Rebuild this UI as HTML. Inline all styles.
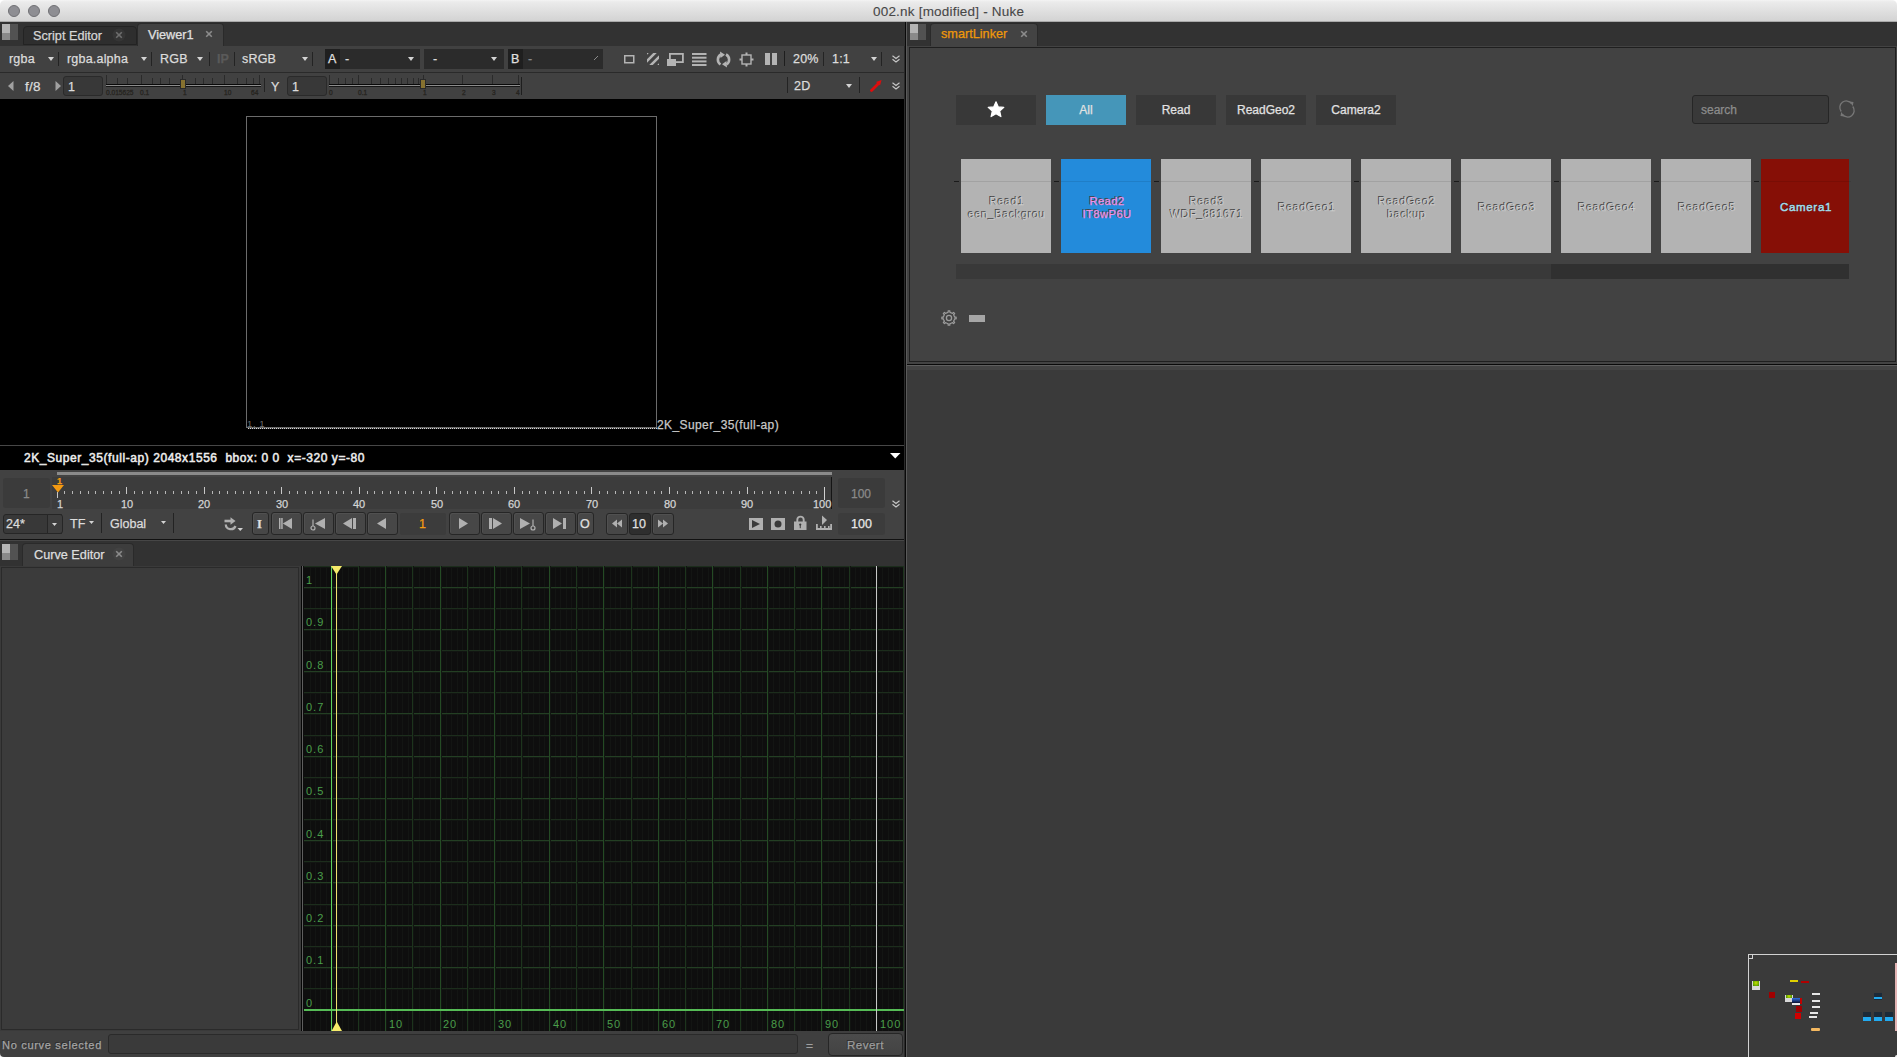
<!DOCTYPE html>
<html><head><meta charset="utf-8">
<style>
*{box-sizing:border-box;margin:0;padding:0}
html,body{width:1897px;height:1057px;overflow:hidden;background:#3a3a3a;font-family:"Liberation Sans",sans-serif;font-size:13px;color:#d0d0d0}
.a{position:absolute}
.t{position:absolute;white-space:pre;line-height:1;-webkit-text-stroke:0.25px currentColor}
svg{position:absolute;overflow:visible}
.tab{position:absolute;border-radius:4px 4px 0 0}
.ico{position:absolute;left:2px;width:16px;height:16px;background:linear-gradient(90deg,#b8b8b8 0,#b8b8b8 8px,#5a5a5a 8px)}
</style></head><body>

<div class="a" style="left:0px;top:0px;width:1897px;height:12px;background:#ffffff"></div>
<div class="a" style="left:0px;top:0px;width:1897px;height:22px;background:linear-gradient(#f4f4f4 0,#ebebeb 2px,#d3d3d3);border-bottom:1px solid #a9a9a9;border-radius:5px 5px 0 0"></div>
<div class="a" style="left:8px;top:5px;width:12px;height:12px;border-radius:50%;background:#8e8e93;border:1px solid #707074"></div>
<div class="a" style="left:28px;top:5px;width:12px;height:12px;border-radius:50%;background:#8e8e93;border:1px solid #707074"></div>
<div class="a" style="left:48px;top:5px;width:12px;height:12px;border-radius:50%;background:#8e8e93;border:1px solid #707074"></div>
<div class="t" style="left:873px;top:5px;font-size:13.5px;letter-spacing:0.2px;color:#474747;-webkit-text-stroke:0.1px #474747">002.nk [modified] - Nuke</div>
<div class="a" style="left:0px;top:22px;width:905px;height:24px;background:#323232"></div>
<div class="a" style="left:2px;top:24px;width:16px;height:16px;background:linear-gradient(90deg,#b5b5b5 0 8px,#525252 8px);"></div>
<div class="a" style="left:2px;top:33px;width:8px;height:7px;background:#8a8a8a"></div>
<div class="a" style="left:23px;top:26px;width:114px;height:19px;background:#2e2e2e;border-radius:4px 4px 0 0;border:1px solid #232323"></div>
<div class="t" style="left:33px;top:30px;font-size:12.7px;color:#d6d6d6">Script Editor</div>
<div class="a" style="left:137px;top:23px;width:87px;height:24px;background:#414141;border-radius:4px 4px 0 0;border:1px solid #2a2a2a;border-bottom:none"></div>
<div class="t" style="left:148px;top:29px;font-size:12.7px;color:#e0e0e0">Viewer1</div>
<div class="a" style="left:0px;top:46px;width:905px;height:26px;background:#414141"></div>
<div class="a" style="left:0px;top:72px;width:905px;height:1px;background:#2a2a2a"></div>
<div class="a" style="left:0px;top:73px;width:905px;height:26px;background:#414141"></div>
<div class="t" style="left:9px;top:53px;font-size:12.5px;letter-spacing:0.2px;color:#dcdcdc">rgba</div>
<svg style="left:48px;top:57px" width="6" height="4"><path d="M0 0H6L3.0 4Z" fill="#d4d4d4"/></svg>
<div class="a" style="left:58px;top:52px;width:1px;height:14px;background:#232323"></div>
<div class="t" style="left:67px;top:53px;font-size:12.5px;letter-spacing:0.2px;color:#dcdcdc">rgba.alpha</div>
<svg style="left:141px;top:57px" width="6" height="4"><path d="M0 0H6L3.0 4Z" fill="#d4d4d4"/></svg>
<div class="a" style="left:151px;top:52px;width:1px;height:14px;background:#232323"></div>
<div class="t" style="left:160px;top:53px;font-size:12.5px;letter-spacing:0.2px;color:#dcdcdc">RGB</div>
<svg style="left:197px;top:57px" width="6" height="4"><path d="M0 0H6L3.0 4Z" fill="#d4d4d4"/></svg>
<div class="a" style="left:209px;top:52px;width:1px;height:14px;background:#232323"></div>
<div class="t" style="left:217px;top:53px;font-size:12.5px;color:#5a5a5a;font-weight:bold">IP</div>
<div class="a" style="left:234px;top:52px;width:1px;height:14px;background:#232323"></div>
<div class="t" style="left:242px;top:53px;font-size:12.5px;letter-spacing:0.2px;color:#dcdcdc">sRGB</div>
<svg style="left:302px;top:57px" width="6" height="4"><path d="M0 0H6L3.0 4Z" fill="#d4d4d4"/></svg>
<div class="a" style="left:312px;top:52px;width:1px;height:14px;background:#232323"></div>
<div class="a" style="left:325px;top:49px;width:95px;height:20px;background:#2b2b2b"></div>
<div class="a" style="left:325px;top:49px;width:15px;height:20px;background:#1f1f1f"></div>
<div class="t" style="left:328px;top:53px;font-size:12.5px;color:#e0e0e0">A</div>
<div class="t" style="left:345px;top:53px;font-size:12.5px;letter-spacing:0.2px;color:#dcdcdc">-</div>
<svg style="left:408px;top:57px" width="6" height="4"><path d="M0 0H6L3.0 4Z" fill="#d4d4d4"/></svg>
<div class="a" style="left:424px;top:49px;width:80px;height:20px;background:#2b2b2b"></div>
<div class="t" style="left:433px;top:53px;font-size:12.5px;letter-spacing:0.2px;color:#dcdcdc">-</div>
<svg style="left:491px;top:57px" width="6" height="4"><path d="M0 0H6L3.0 4Z" fill="#d4d4d4"/></svg>
<div class="a" style="left:508px;top:49px;width:95px;height:20px;background:#2b2b2b"></div>
<div class="a" style="left:508px;top:49px;width:15px;height:20px;background:#1f1f1f"></div>
<div class="t" style="left:511px;top:53px;font-size:12.5px;color:#e0e0e0">B</div>
<div class="t" style="left:528px;top:53px;font-size:12.5px;color:#8a8a8a">-</div>
<svg style="left:594px;top:56px" width="4" height="4"><path d="M0 4L4 0" stroke="#8a8a8a" stroke-width="1"/></svg>
<svg style="left:624px;top:55px" width="11" height="9"><rect x="0.75" y="0.75" width="9" height="7" fill="none" stroke="#b4b4b4" stroke-width="1.5"/></svg>
<svg style="left:647px;top:53px" width="12" height="12"><defs><clipPath id="hc"><rect width="12" height="12"/></clipPath></defs><g clip-path="url(#hc)" stroke="#b4b4b4" stroke-width="2.5"><path d="M-3 3L3 -3M-3 11L11 -3M1 15L15 1M9 15L15 9"/></g></svg>
<svg style="left:667px;top:53px" width="17" height="14"><rect x="2.9" y="0.9" width="13" height="8.2" fill="none" stroke="#b4b4b4" stroke-width="1.8"/><rect x="0" y="6" width="9" height="7" fill="#b4b4b4"/></svg>
<svg style="left:692px;top:53px" width="15" height="13"><g fill="#b4b4b4"><rect y="0" width="14.5" height="2"/><rect y="3.7" width="14.5" height="2"/><rect y="7.4" width="14.5" height="2"/><rect y="11" width="14.5" height="2"/></g></svg>
<svg style="left:715px;top:51px" width="17" height="17"><g fill="none" stroke="#b4b4b4" stroke-width="2.6"><path d="M6 3.5A5.8 5.8 0 0 0 5.5 13.5"/><path d="M11 3.5A5.8 5.8 0 0 1 11.5 13.5"/></g><path d="M5 0.5L10 3.8 5.5 7Z" fill="#b4b4b4"/><path d="M12 16.5L7 13.2 11.5 10Z" fill="#b4b4b4"/></svg>
<svg style="left:739px;top:52px" width="15" height="15"><rect x="3" y="3" width="9" height="9" fill="none" stroke="#b4b4b4" stroke-width="1.4"/><g fill="#b4b4b4"><rect x="6.5" y="0.5" width="2" height="2.5"/><rect x="6.5" y="12" width="2" height="2.5"/><rect x="0.5" y="6.5" width="2.5" height="2"/><rect x="12" y="6.5" width="2.5" height="2"/></g></svg>
<div class="a" style="left:765px;top:53px;width:5px;height:12px;background:#b4b4b4"></div>
<div class="a" style="left:772px;top:53px;width:5px;height:12px;background:#b4b4b4"></div>
<div class="a" style="left:784px;top:51px;width:1px;height:15px;background:#1e1e1e"></div>
<div class="t" style="left:793px;top:53px;font-size:12.5px;letter-spacing:0.2px;color:#dcdcdc">20%</div>
<div class="a" style="left:823px;top:52px;width:1px;height:14px;background:#232323"></div>
<div class="t" style="left:832px;top:53px;font-size:12.5px;letter-spacing:0.2px;color:#dcdcdc">1:1</div>
<svg style="left:871px;top:57px" width="6" height="4"><path d="M0 0H6L3.0 4Z" fill="#d4d4d4"/></svg>
<div class="a" style="left:881px;top:52px;width:1px;height:14px;background:#232323"></div>
<svg style="left:892px;top:55px" width="8" height="8"><path d="M0.5 0.8L4 3.5 7.5 0.8M0.5 4.3L4 7 7.5 4.3" fill="none" stroke="#c8c8c8" stroke-width="1.1"/></svg>
<svg style="left:8px;top:81px" width="6" height="10"><path d="M5.5 0V10L0 5Z" fill="#a0a0a0"/></svg>
<div class="t" style="left:25px;top:80px;font-size:13.5px;letter-spacing:0.3px;color:#dcdcdc">f/8</div>
<svg style="left:55px;top:81px" width="6" height="10"><path d="M0.5 0V10L6 5Z" fill="#a0a0a0"/></svg>
<div class="a" style="left:63px;top:76px;width:40px;height:20px;background:#383838;border:1px solid #2a2a2a;border-radius:3px"></div>
<div class="t" style="left:68px;top:81px;font-size:12.5px;letter-spacing:0.2px;color:#dcdcdc">1</div>
<div class="a" style="left:106px;top:84px;width:155px;height:1px;background:#0a0a0a"></div>
<div class="a" style="left:106px;top:85px;width:155px;height:1px;background:#8c8c8c"></div>
<div class="a" style="left:106px;top:86px;width:155px;height:1px;background:#161616"></div>
<div class="a" style="left:106px;top:75px;width:1px;height:9px;background:#2a2a2a"></div>
<div class="a" style="left:117px;top:78px;width:1px;height:6px;background:#2a2a2a"></div>
<div class="a" style="left:127px;top:78px;width:1px;height:6px;background:#2a2a2a"></div>
<div class="a" style="left:141px;top:75px;width:1px;height:9px;background:#2a2a2a"></div>
<div class="a" style="left:152px;top:78px;width:1px;height:6px;background:#2a2a2a"></div>
<div class="a" style="left:160px;top:78px;width:1px;height:6px;background:#2a2a2a"></div>
<div class="a" style="left:169px;top:78px;width:1px;height:6px;background:#2a2a2a"></div>
<div class="a" style="left:182px;top:75px;width:1px;height:9px;background:#2a2a2a"></div>
<div class="a" style="left:195px;top:78px;width:1px;height:6px;background:#2a2a2a"></div>
<div class="a" style="left:203px;top:78px;width:1px;height:6px;background:#2a2a2a"></div>
<div class="a" style="left:212px;top:78px;width:1px;height:6px;background:#2a2a2a"></div>
<div class="a" style="left:224px;top:75px;width:1px;height:9px;background:#2a2a2a"></div>
<div class="a" style="left:237px;top:78px;width:1px;height:6px;background:#2a2a2a"></div>
<div class="a" style="left:246px;top:78px;width:1px;height:6px;background:#2a2a2a"></div>
<div class="a" style="left:253px;top:78px;width:1px;height:6px;background:#2a2a2a"></div>
<div class="a" style="left:259px;top:75px;width:1px;height:9px;background:#2a2a2a"></div>
<div class="t" style="left:106px;top:90px;font-size:6.6px;color:#26241f;-webkit-text-stroke:0.3px #26241f">0.015625</div>
<div class="t" style="left:140px;top:90px;font-size:6.6px;color:#26241f;-webkit-text-stroke:0.3px #26241f">0.1</div>
<div class="t" style="left:183px;top:90px;font-size:6.6px;color:#26241f;-webkit-text-stroke:0.3px #26241f">1</div>
<div class="t" style="left:224px;top:90px;font-size:6.6px;color:#26241f;-webkit-text-stroke:0.3px #26241f">10</div>
<div class="t" style="left:251px;top:90px;font-size:6.6px;color:#26241f;-webkit-text-stroke:0.3px #26241f">64</div>
<div class="a" style="left:180px;top:79px;width:6px;height:10px;background:#86712f;border:1px solid #2a2a2a"></div>
<div class="a" style="left:264px;top:78px;width:1px;height:14px;background:#232323"></div>
<div class="t" style="left:271px;top:81px;font-size:12.5px;letter-spacing:0.2px;color:#dcdcdc">Y</div>
<div class="a" style="left:287px;top:76px;width:40px;height:20px;background:#383838;border:1px solid #2a2a2a;border-radius:3px"></div>
<div class="t" style="left:292px;top:81px;font-size:12.5px;letter-spacing:0.2px;color:#dcdcdc">1</div>
<div class="a" style="left:329px;top:84px;width:191px;height:1px;background:#0a0a0a"></div>
<div class="a" style="left:329px;top:85px;width:191px;height:1px;background:#8c8c8c"></div>
<div class="a" style="left:329px;top:86px;width:191px;height:1px;background:#161616"></div>
<div class="a" style="left:329px;top:75px;width:1px;height:9px;background:#2a2a2a"></div>
<div class="a" style="left:338px;top:78px;width:1px;height:6px;background:#2a2a2a"></div>
<div class="a" style="left:345px;top:78px;width:1px;height:6px;background:#2a2a2a"></div>
<div class="a" style="left:352px;top:78px;width:1px;height:6px;background:#2a2a2a"></div>
<div class="a" style="left:358px;top:75px;width:1px;height:9px;background:#2a2a2a"></div>
<div class="a" style="left:371px;top:78px;width:1px;height:6px;background:#2a2a2a"></div>
<div class="a" style="left:380px;top:78px;width:1px;height:6px;background:#2a2a2a"></div>
<div class="a" style="left:388px;top:78px;width:1px;height:6px;background:#2a2a2a"></div>
<div class="a" style="left:395px;top:78px;width:1px;height:6px;background:#2a2a2a"></div>
<div class="a" style="left:401px;top:78px;width:1px;height:6px;background:#2a2a2a"></div>
<div class="a" style="left:407px;top:78px;width:1px;height:6px;background:#2a2a2a"></div>
<div class="a" style="left:413px;top:78px;width:1px;height:6px;background:#2a2a2a"></div>
<div class="a" style="left:418px;top:78px;width:1px;height:6px;background:#2a2a2a"></div>
<div class="a" style="left:423px;top:75px;width:1px;height:9px;background:#2a2a2a"></div>
<div class="a" style="left:462px;top:75px;width:1px;height:9px;background:#2a2a2a"></div>
<div class="a" style="left:492px;top:75px;width:1px;height:9px;background:#2a2a2a"></div>
<div class="a" style="left:518px;top:75px;width:1px;height:9px;background:#2a2a2a"></div>
<div class="t" style="left:329px;top:90px;font-size:6.6px;color:#26241f;-webkit-text-stroke:0.3px #26241f">0</div>
<div class="t" style="left:358px;top:90px;font-size:6.6px;color:#26241f;-webkit-text-stroke:0.3px #26241f">0.1</div>
<div class="t" style="left:423px;top:90px;font-size:6.6px;color:#26241f;-webkit-text-stroke:0.3px #26241f">1</div>
<div class="t" style="left:462px;top:90px;font-size:6.6px;color:#26241f;-webkit-text-stroke:0.3px #26241f">2</div>
<div class="t" style="left:492px;top:90px;font-size:6.6px;color:#26241f;-webkit-text-stroke:0.3px #26241f">3</div>
<div class="t" style="left:516px;top:90px;font-size:6.6px;color:#26241f;-webkit-text-stroke:0.3px #26241f">4</div>
<div class="a" style="left:420px;top:79px;width:6px;height:10px;background:#86712f;border:1px solid #2a2a2a"></div>
<div class="a" style="left:521px;top:77px;width:1px;height:18px;background:#1e1e1e"></div>
<div class="a" style="left:787px;top:77px;width:1px;height:16px;background:#232323"></div>
<div class="t" style="left:794px;top:80px;font-size:12.5px;letter-spacing:0.2px;color:#dcdcdc">2D</div>
<svg style="left:846px;top:84px" width="6" height="4"><path d="M0 0H6L3.0 4Z" fill="#d4d4d4"/></svg>
<div class="a" style="left:859px;top:77px;width:1px;height:16px;background:#232323"></div>
<svg style="left:870px;top:79px" width="13" height="13"><path d="M1.5 11.5L8 5" stroke="#e00c0c" stroke-width="2.8" stroke-linecap="round"/><path d="M6 3L11.5 1 10 6.5Z" fill="#e00c0c"/></svg>
<svg style="left:892px;top:82px" width="8" height="8"><path d="M0.5 0.8L4 3.5 7.5 0.8M0.5 4.3L4 7 7.5 4.3" fill="none" stroke="#c8c8c8" stroke-width="1.1"/></svg>
<div class="a" style="left:0px;top:99px;width:905px;height:346px;background:#000"></div>
<div class="a" style="left:246px;top:116px;width:411px;height:312px;border:1px solid #6b6b6b"></div>
<div class="a" style="left:248px;top:428px;width:409px;height:1px;background:repeating-linear-gradient(90deg,#d8d8d8 0 1px,#3a3a3a 1px 2px)"></div>
<div class="t" style="left:657px;top:419px;font-size:12px;letter-spacing:0.4px;color:#c8c8c8">2K_Super_35(full-ap)</div>
<div class="t" style="left:247px;top:419px;font-size:9.5px;letter-spacing:0.6px;color:#6e6e6e;-webkit-text-stroke:0">1, 1</div>
<div class="a" style="left:0px;top:445px;width:905px;height:1px;background:#474747"></div>
<div class="a" style="left:0px;top:446px;width:905px;height:24px;background:#000"></div>
<div class="t" style="left:24px;top:452px;font-size:12px;letter-spacing:0.56px;color:#ededed;-webkit-text-stroke:0.5px #ededed">2K_Super_35(full-ap) 2048x1556  bbox: 0 0  x=-320 y=-80</div>
<svg style="left:890px;top:453px" width="11" height="6"><path d="M0 0H10.5L5.25 5.5Z" fill="#fff"/></svg>
<div class="a" style="left:904px;top:99px;width:1px;height:371px;background:#4a4a4a"></div>
<div class="a" style="left:0px;top:470px;width:904px;height:39px;background:#424242"></div>
<div class="a" style="left:57px;top:472px;width:775px;height:3px;background:#8a8a8a"></div>
<div class="a" style="left:3px;top:478px;width:47px;height:30px;background:#3b3b3b;border-radius:3px"></div>
<div class="t" style="left:23px;top:488px;font-size:12px;color:#8a8a8a">1</div>
<div class="a" style="left:52px;top:477px;width:780px;height:32px;background:#3c3c3c"></div>
<div class="a" style="left:831px;top:477px;width:1px;height:32px;background:#151515"></div>
<div class="a" style="left:838px;top:478px;width:47px;height:30px;background:#3b3b3b;border-radius:3px"></div>
<div class="t" style="left:851px;top:488px;font-size:12px;color:#8a8a8a">100</div>
<div class="a" style="left:0px;top:509px;width:904px;height:30px;background:#424242"></div>
<div class="a" style="left:0px;top:539px;width:905px;height:1px;background:#111"></div>
<div class="a" style="left:0px;top:540px;width:905px;height:1px;background:#464646"></div>
<div class="a" style="left:57px;top:492px;width:1px;height:6px;background:#c8c8c8"></div>
<div class="a" style="left:64px;top:491px;width:1px;height:3px;background:#b8b8b8"></div>
<div class="a" style="left:72px;top:491px;width:1px;height:3px;background:#b8b8b8"></div>
<div class="a" style="left:80px;top:491px;width:1px;height:3px;background:#b8b8b8"></div>
<div class="a" style="left:88px;top:491px;width:1px;height:3px;background:#b8b8b8"></div>
<div class="a" style="left:95px;top:491px;width:1px;height:3px;background:#b8b8b8"></div>
<div class="a" style="left:103px;top:491px;width:1px;height:3px;background:#b8b8b8"></div>
<div class="a" style="left:111px;top:491px;width:1px;height:3px;background:#b8b8b8"></div>
<div class="a" style="left:119px;top:491px;width:1px;height:3px;background:#b8b8b8"></div>
<div class="a" style="left:126px;top:487px;width:1px;height:7px;background:#c8c8c8"></div>
<div class="a" style="left:134px;top:491px;width:1px;height:3px;background:#b8b8b8"></div>
<div class="a" style="left:142px;top:491px;width:1px;height:3px;background:#b8b8b8"></div>
<div class="a" style="left:150px;top:491px;width:1px;height:3px;background:#b8b8b8"></div>
<div class="a" style="left:157px;top:491px;width:1px;height:3px;background:#b8b8b8"></div>
<div class="a" style="left:165px;top:491px;width:1px;height:3px;background:#b8b8b8"></div>
<div class="a" style="left:173px;top:491px;width:1px;height:3px;background:#b8b8b8"></div>
<div class="a" style="left:181px;top:491px;width:1px;height:3px;background:#b8b8b8"></div>
<div class="a" style="left:188px;top:491px;width:1px;height:3px;background:#b8b8b8"></div>
<div class="a" style="left:196px;top:491px;width:1px;height:3px;background:#b8b8b8"></div>
<div class="a" style="left:204px;top:487px;width:1px;height:7px;background:#c8c8c8"></div>
<div class="a" style="left:212px;top:491px;width:1px;height:3px;background:#b8b8b8"></div>
<div class="a" style="left:219px;top:491px;width:1px;height:3px;background:#b8b8b8"></div>
<div class="a" style="left:227px;top:491px;width:1px;height:3px;background:#b8b8b8"></div>
<div class="a" style="left:235px;top:491px;width:1px;height:3px;background:#b8b8b8"></div>
<div class="a" style="left:243px;top:491px;width:1px;height:3px;background:#b8b8b8"></div>
<div class="a" style="left:250px;top:491px;width:1px;height:3px;background:#b8b8b8"></div>
<div class="a" style="left:258px;top:491px;width:1px;height:3px;background:#b8b8b8"></div>
<div class="a" style="left:266px;top:491px;width:1px;height:3px;background:#b8b8b8"></div>
<div class="a" style="left:274px;top:491px;width:1px;height:3px;background:#b8b8b8"></div>
<div class="a" style="left:281px;top:487px;width:1px;height:7px;background:#c8c8c8"></div>
<div class="a" style="left:289px;top:491px;width:1px;height:3px;background:#b8b8b8"></div>
<div class="a" style="left:297px;top:491px;width:1px;height:3px;background:#b8b8b8"></div>
<div class="a" style="left:305px;top:491px;width:1px;height:3px;background:#b8b8b8"></div>
<div class="a" style="left:312px;top:491px;width:1px;height:3px;background:#b8b8b8"></div>
<div class="a" style="left:320px;top:491px;width:1px;height:3px;background:#b8b8b8"></div>
<div class="a" style="left:328px;top:491px;width:1px;height:3px;background:#b8b8b8"></div>
<div class="a" style="left:336px;top:491px;width:1px;height:3px;background:#b8b8b8"></div>
<div class="a" style="left:343px;top:491px;width:1px;height:3px;background:#b8b8b8"></div>
<div class="a" style="left:351px;top:491px;width:1px;height:3px;background:#b8b8b8"></div>
<div class="a" style="left:359px;top:487px;width:1px;height:7px;background:#c8c8c8"></div>
<div class="a" style="left:367px;top:491px;width:1px;height:3px;background:#b8b8b8"></div>
<div class="a" style="left:374px;top:491px;width:1px;height:3px;background:#b8b8b8"></div>
<div class="a" style="left:382px;top:491px;width:1px;height:3px;background:#b8b8b8"></div>
<div class="a" style="left:390px;top:491px;width:1px;height:3px;background:#b8b8b8"></div>
<div class="a" style="left:398px;top:491px;width:1px;height:3px;background:#b8b8b8"></div>
<div class="a" style="left:405px;top:491px;width:1px;height:3px;background:#b8b8b8"></div>
<div class="a" style="left:413px;top:491px;width:1px;height:3px;background:#b8b8b8"></div>
<div class="a" style="left:421px;top:491px;width:1px;height:3px;background:#b8b8b8"></div>
<div class="a" style="left:429px;top:491px;width:1px;height:3px;background:#b8b8b8"></div>
<div class="a" style="left:436px;top:487px;width:1px;height:7px;background:#c8c8c8"></div>
<div class="a" style="left:444px;top:491px;width:1px;height:3px;background:#b8b8b8"></div>
<div class="a" style="left:452px;top:491px;width:1px;height:3px;background:#b8b8b8"></div>
<div class="a" style="left:460px;top:491px;width:1px;height:3px;background:#b8b8b8"></div>
<div class="a" style="left:467px;top:491px;width:1px;height:3px;background:#b8b8b8"></div>
<div class="a" style="left:475px;top:491px;width:1px;height:3px;background:#b8b8b8"></div>
<div class="a" style="left:483px;top:491px;width:1px;height:3px;background:#b8b8b8"></div>
<div class="a" style="left:491px;top:491px;width:1px;height:3px;background:#b8b8b8"></div>
<div class="a" style="left:498px;top:491px;width:1px;height:3px;background:#b8b8b8"></div>
<div class="a" style="left:506px;top:491px;width:1px;height:3px;background:#b8b8b8"></div>
<div class="a" style="left:514px;top:487px;width:1px;height:7px;background:#c8c8c8"></div>
<div class="a" style="left:522px;top:491px;width:1px;height:3px;background:#b8b8b8"></div>
<div class="a" style="left:529px;top:491px;width:1px;height:3px;background:#b8b8b8"></div>
<div class="a" style="left:537px;top:491px;width:1px;height:3px;background:#b8b8b8"></div>
<div class="a" style="left:545px;top:491px;width:1px;height:3px;background:#b8b8b8"></div>
<div class="a" style="left:553px;top:491px;width:1px;height:3px;background:#b8b8b8"></div>
<div class="a" style="left:560px;top:491px;width:1px;height:3px;background:#b8b8b8"></div>
<div class="a" style="left:568px;top:491px;width:1px;height:3px;background:#b8b8b8"></div>
<div class="a" style="left:576px;top:491px;width:1px;height:3px;background:#b8b8b8"></div>
<div class="a" style="left:584px;top:491px;width:1px;height:3px;background:#b8b8b8"></div>
<div class="a" style="left:591px;top:487px;width:1px;height:7px;background:#c8c8c8"></div>
<div class="a" style="left:599px;top:491px;width:1px;height:3px;background:#b8b8b8"></div>
<div class="a" style="left:607px;top:491px;width:1px;height:3px;background:#b8b8b8"></div>
<div class="a" style="left:615px;top:491px;width:1px;height:3px;background:#b8b8b8"></div>
<div class="a" style="left:623px;top:491px;width:1px;height:3px;background:#b8b8b8"></div>
<div class="a" style="left:630px;top:491px;width:1px;height:3px;background:#b8b8b8"></div>
<div class="a" style="left:638px;top:491px;width:1px;height:3px;background:#b8b8b8"></div>
<div class="a" style="left:646px;top:491px;width:1px;height:3px;background:#b8b8b8"></div>
<div class="a" style="left:654px;top:491px;width:1px;height:3px;background:#b8b8b8"></div>
<div class="a" style="left:661px;top:491px;width:1px;height:3px;background:#b8b8b8"></div>
<div class="a" style="left:669px;top:487px;width:1px;height:7px;background:#c8c8c8"></div>
<div class="a" style="left:677px;top:491px;width:1px;height:3px;background:#b8b8b8"></div>
<div class="a" style="left:685px;top:491px;width:1px;height:3px;background:#b8b8b8"></div>
<div class="a" style="left:692px;top:491px;width:1px;height:3px;background:#b8b8b8"></div>
<div class="a" style="left:700px;top:491px;width:1px;height:3px;background:#b8b8b8"></div>
<div class="a" style="left:708px;top:491px;width:1px;height:3px;background:#b8b8b8"></div>
<div class="a" style="left:716px;top:491px;width:1px;height:3px;background:#b8b8b8"></div>
<div class="a" style="left:723px;top:491px;width:1px;height:3px;background:#b8b8b8"></div>
<div class="a" style="left:731px;top:491px;width:1px;height:3px;background:#b8b8b8"></div>
<div class="a" style="left:739px;top:491px;width:1px;height:3px;background:#b8b8b8"></div>
<div class="a" style="left:747px;top:487px;width:1px;height:7px;background:#c8c8c8"></div>
<div class="a" style="left:754px;top:491px;width:1px;height:3px;background:#b8b8b8"></div>
<div class="a" style="left:762px;top:491px;width:1px;height:3px;background:#b8b8b8"></div>
<div class="a" style="left:770px;top:491px;width:1px;height:3px;background:#b8b8b8"></div>
<div class="a" style="left:778px;top:491px;width:1px;height:3px;background:#b8b8b8"></div>
<div class="a" style="left:785px;top:491px;width:1px;height:3px;background:#b8b8b8"></div>
<div class="a" style="left:793px;top:491px;width:1px;height:3px;background:#b8b8b8"></div>
<div class="a" style="left:801px;top:491px;width:1px;height:3px;background:#b8b8b8"></div>
<div class="a" style="left:809px;top:491px;width:1px;height:3px;background:#b8b8b8"></div>
<div class="a" style="left:816px;top:491px;width:1px;height:3px;background:#b8b8b8"></div>
<div class="a" style="left:824px;top:487px;width:1px;height:13px;background:#d0d0d0"></div>
<div class="t" style="left:57px;top:499px;font-size:11px;color:#d4d4d4">1</div>
<div class="t" style="left:121px;top:499px;font-size:11px;color:#d4d4d4">10</div>
<div class="t" style="left:198px;top:499px;font-size:11px;color:#d4d4d4">20</div>
<div class="t" style="left:276px;top:499px;font-size:11px;color:#d4d4d4">30</div>
<div class="t" style="left:353px;top:499px;font-size:11px;color:#d4d4d4">40</div>
<div class="t" style="left:431px;top:499px;font-size:11px;color:#d4d4d4">50</div>
<div class="t" style="left:508px;top:499px;font-size:11px;color:#d4d4d4">60</div>
<div class="t" style="left:586px;top:499px;font-size:11px;color:#d4d4d4">70</div>
<div class="t" style="left:664px;top:499px;font-size:11px;color:#d4d4d4">80</div>
<div class="t" style="left:741px;top:499px;font-size:11px;color:#d4d4d4">90</div>
<div class="t" style="left:813px;top:499px;font-size:11px;color:#d4d4d4">100</div>
<svg style="left:52px;top:485px" width="12" height="8"><path d="M0 0H12L6 7.5Z" fill="#f39a12"/></svg>
<div class="t" style="left:57px;top:477px;font-size:9px;color:#f39a12;font-weight:bold">1</div>
<svg style="left:892px;top:500px" width="8" height="8"><path d="M0.5 0.8L4 3.5 7.5 0.8M0.5 4.3L4 7 7.5 4.3" fill="none" stroke="#c8c8c8" stroke-width="1.1"/></svg>
<div class="a" style="left:3px;top:514px;width:59px;height:20px;background:#383838;border:1px solid #262626;border-radius:3px 0 0 3px"></div>
<div class="a" style="left:47px;top:514px;width:16px;height:20px;background:#3d3d3d;border:1px solid #262626;border-radius:0 3px 3px 0"></div>
<div class="t" style="left:6px;top:518px;font-size:12.5px;color:#dcdcdc">24*</div>
<svg style="left:52px;top:523px" width="5" height="3"><path d="M0 0H5L2.5 3Z" fill="#d4d4d4"/></svg>
<div class="t" style="left:70px;top:518px;font-size:12.5px;color:#dcdcdc">TF</div>
<svg style="left:89px;top:521px" width="5" height="3"><path d="M0 0H5L2.5 3Z" fill="#d4d4d4"/></svg>
<div class="a" style="left:101px;top:513px;width:1px;height:20px;background:#232323"></div>
<div class="t" style="left:110px;top:518px;font-size:12.5px;color:#dcdcdc">Global</div>
<svg style="left:161px;top:521px" width="5" height="3"><path d="M0 0H5L2.5 3Z" fill="#d4d4d4"/></svg>
<div class="a" style="left:173px;top:513px;width:1px;height:20px;background:#232323"></div>
<svg style="left:224px;top:517px" width="20" height="15"><path d="M0.5 4H7.5" stroke="#b0b0b0" stroke-width="2.6"/><path d="M6.5 0.3L11.5 4 6.5 7.7Z" fill="#b0b0b0"/><path d="M1.8 7.5A5 4.8 0 0 0 11.5 9" fill="none" stroke="#b0b0b0" stroke-width="2.2"/><path d="M13.5 11H19L16.25 14Z" fill="#d0d0d0"/></svg>
<div class="a" style="left:252px;top:512px;width:17px;height:23px;background:#474747;border:1px solid #262626;border-radius:3px;box-shadow:inset 1px 1px 0 #505050"></div>
<div class="t" style="left:257px;top:518px;font-size:12.5px;color:#e0e0e0;font-family:'Liberation Serif';font-weight:bold">I</div>
<div class="a" style="left:271px;top:512px;width:31px;height:23px;background:#474747;border:1px solid #262626;border-radius:3px;box-shadow:inset 1px 1px 0 #505050"></div>
<div class="a" style="left:303px;top:512px;width:31px;height:23px;background:#474747;border:1px solid #262626;border-radius:3px;box-shadow:inset 1px 1px 0 #505050"></div>
<div class="a" style="left:335px;top:512px;width:31px;height:23px;background:#474747;border:1px solid #262626;border-radius:3px;box-shadow:inset 1px 1px 0 #505050"></div>
<div class="a" style="left:367px;top:512px;width:31px;height:23px;background:#474747;border:1px solid #262626;border-radius:3px;box-shadow:inset 1px 1px 0 #505050"></div>
<div class="a" style="left:449px;top:512px;width:31px;height:23px;background:#474747;border:1px solid #262626;border-radius:3px;box-shadow:inset 1px 1px 0 #505050"></div>
<div class="a" style="left:481px;top:512px;width:31px;height:23px;background:#474747;border:1px solid #262626;border-radius:3px;box-shadow:inset 1px 1px 0 #505050"></div>
<div class="a" style="left:513px;top:512px;width:31px;height:23px;background:#474747;border:1px solid #262626;border-radius:3px;box-shadow:inset 1px 1px 0 #505050"></div>
<div class="a" style="left:545px;top:512px;width:31px;height:23px;background:#474747;border:1px solid #262626;border-radius:3px;box-shadow:inset 1px 1px 0 #505050"></div>
<div class="a" style="left:577px;top:512px;width:17px;height:23px;background:#474747;border:1px solid #262626;border-radius:3px;box-shadow:inset 1px 1px 0 #505050"></div>
<svg style="left:279px;top:518px" width="14" height="12"><rect x="0" y="0" width="1.5" height="11" fill="#b0b0b0"/><rect x="2.2" y="0" width="1.5" height="11" fill="#b0b0b0"/><path d="M3.8 5.5L13 0V11Z" fill="#b0b0b0"/></svg>
<svg style="left:310px;top:518px" width="18" height="13"><circle cx="3" cy="10" r="2" fill="none" stroke="#b0b0b0" stroke-width="1.2"/><path d="M3 8V1.5" stroke="#b0b0b0" stroke-width="1.2"/><path d="M5 5.5L15 0V11Z" fill="#b0b0b0"/></svg>
<svg style="left:343px;top:518px" width="14" height="12"><path d="M0 5.5L9 0V11Z" fill="#b0b0b0"/><rect x="10" y="0" width="3" height="11" fill="#b0b0b0"/></svg>
<svg style="left:377px;top:518px" width="10" height="12"><path d="M0 5.5L9 0V11Z" fill="#b0b0b0"/></svg>
<div class="a" style="left:400px;top:513px;width:46px;height:22px;background:#3c3c3c;border-radius:2px"></div>
<div class="t" style="left:419px;top:518px;font-size:12.5px;color:#f39a12">1</div>
<svg style="left:459px;top:518px" width="10" height="12"><path d="M9 5.5L0 0V11Z" fill="#b0b0b0"/></svg>
<svg style="left:489px;top:518px" width="14" height="12"><rect x="0" y="0" width="3" height="11" fill="#b0b0b0"/><path d="M13 5.5L4 0V11Z" fill="#b0b0b0"/></svg>
<svg style="left:520px;top:518px" width="18" height="13"><path d="M10 5.5L0 0V11Z" fill="#b0b0b0"/><circle cx="13" cy="10" r="2" fill="none" stroke="#b0b0b0" stroke-width="1.2"/><path d="M13 8V1.5" stroke="#b0b0b0" stroke-width="1.2"/></svg>
<svg style="left:553px;top:518px" width="14" height="12"><path d="M9 5.5L0 0V11Z" fill="#b0b0b0"/><rect x="10" y="0" width="3" height="11" fill="#b0b0b0"/></svg>
<div class="t" style="left:580px;top:518px;font-size:12.5px;color:#e0e0e0">O</div>
<div class="a" style="left:606px;top:513px;width:22px;height:22px;background:#474747;border:1px solid #262626;border-radius:3px;box-shadow:inset 1px 1px 0 #505050"></div>
<div class="a" style="left:652px;top:513px;width:22px;height:22px;background:#474747;border:1px solid #262626;border-radius:3px;box-shadow:inset 1px 1px 0 #505050"></div>
<div class="a" style="left:629px;top:513px;width:22px;height:22px;background:#2e2e2e;border:1px solid #242424;border-radius:3px"></div>
<div class="t" style="left:632px;top:518px;font-size:12.5px;color:#e0e0e0">10</div>
<svg style="left:612px;top:519px" width="11" height="9"><path d="M0 4.5L5 0.5V8.5Z M5 4.5L10 0.5V8.5Z" fill="#b0b0b0"/></svg>
<svg style="left:658px;top:519px" width="11" height="9"><path d="M10 4.5L5 0.5V8.5Z M5 4.5L0 0.5V8.5Z" fill="#b0b0b0"/></svg>
<svg style="left:749px;top:518px" width="15" height="13"><rect width="14" height="12" fill="#b0b0b0"/><path d="M3 2L11 6 3 10Z" fill="#3a3a3a"/></svg>
<svg style="left:771px;top:518px" width="15" height="13"><rect width="14" height="12" fill="#b0b0b0"/><circle cx="7" cy="6" r="3.5" fill="#3a3a3a"/></svg>
<svg style="left:794px;top:515px" width="13" height="16"><path d="M3.3 7.5V4.8A3.2 3.2 0 0 1 9.7 4.8V7.5" fill="none" stroke="#b0b0b0" stroke-width="1.9"/><rect x="0" y="6.5" width="12.5" height="8.5" fill="#b0b0b0"/><circle cx="6.25" cy="9.6" r="1.1" fill="#3a3a3a"/><rect x="5.75" y="9.6" width="1" height="3.6" fill="#3a3a3a"/></svg>
<svg style="left:816px;top:515px" width="17" height="16"><path d="M6 0.5L11 5 6 10Z" fill="#b0b0b0"/><path d="M0 9H1.8V13H4V11H5.6V13H8V11H9.6V13H12V11H13.6V13H14.2V9H16V15H0Z" fill="#b0b0b0"/></svg>
<div class="a" style="left:838px;top:513px;width:47px;height:22px;background:#3c3c3c;border-radius:3px"></div>
<div class="t" style="left:851px;top:518px;font-size:12.5px;color:#e8e8e8">100</div>
<div class="a" style="left:0px;top:541px;width:905px;height:25px;background:#323232"></div>
<div class="a" style="left:2px;top:544px;width:16px;height:16px;background:linear-gradient(90deg,#b5b5b5 0 8px,#525252 8px);"></div>
<div class="a" style="left:2px;top:553px;width:8px;height:7px;background:#8a8a8a"></div>
<div class="a" style="left:22px;top:543px;width:112px;height:24px;background:#3d3d3d;border-radius:4px 4px 0 0;border:1px solid #2a2a2a;border-bottom:none"></div>
<div class="t" style="left:34px;top:549px;font-size:12.7px;color:#dedede">Curve Editor</div>
<div class="a" style="left:0px;top:566px;width:905px;height:466px;background:#3a3a3a"></div>
<div class="a" style="left:1px;top:567px;width:298px;height:463px;background:#3b3b3b;border:1px solid #2a2a2a"></div>
<div class="a" style="left:301px;top:566px;width:1px;height:465px;background:#050505"></div>
<div class="a" style="left:302px;top:566px;width:1px;height:465px;background:#5e5e5e"></div>
<div class="a" style="left:303px;top:566px;width:602px;height:465px;background:#0e0e0e"></div>
<div class="a" style="left:310px;top:566px;width:1px;height:465px;background:#131513"></div>
<div class="a" style="left:315px;top:566px;width:1px;height:465px;background:#131513"></div>
<div class="a" style="left:320px;top:566px;width:1px;height:465px;background:#131513"></div>
<div class="a" style="left:326px;top:566px;width:1px;height:465px;background:#131513"></div>
<div class="a" style="left:337px;top:566px;width:1px;height:465px;background:#131513"></div>
<div class="a" style="left:342px;top:566px;width:1px;height:465px;background:#131513"></div>
<div class="a" style="left:348px;top:566px;width:1px;height:465px;background:#131513"></div>
<div class="a" style="left:353px;top:566px;width:1px;height:465px;background:#131513"></div>
<div class="a" style="left:364px;top:566px;width:1px;height:465px;background:#131513"></div>
<div class="a" style="left:370px;top:566px;width:1px;height:465px;background:#131513"></div>
<div class="a" style="left:375px;top:566px;width:1px;height:465px;background:#131513"></div>
<div class="a" style="left:380px;top:566px;width:1px;height:465px;background:#131513"></div>
<div class="a" style="left:391px;top:566px;width:1px;height:465px;background:#131513"></div>
<div class="a" style="left:397px;top:566px;width:1px;height:465px;background:#131513"></div>
<div class="a" style="left:402px;top:566px;width:1px;height:465px;background:#131513"></div>
<div class="a" style="left:408px;top:566px;width:1px;height:465px;background:#131513"></div>
<div class="a" style="left:419px;top:566px;width:1px;height:465px;background:#131513"></div>
<div class="a" style="left:424px;top:566px;width:1px;height:465px;background:#131513"></div>
<div class="a" style="left:430px;top:566px;width:1px;height:465px;background:#131513"></div>
<div class="a" style="left:435px;top:566px;width:1px;height:465px;background:#131513"></div>
<div class="a" style="left:446px;top:566px;width:1px;height:465px;background:#131513"></div>
<div class="a" style="left:451px;top:566px;width:1px;height:465px;background:#131513"></div>
<div class="a" style="left:457px;top:566px;width:1px;height:465px;background:#131513"></div>
<div class="a" style="left:462px;top:566px;width:1px;height:465px;background:#131513"></div>
<div class="a" style="left:473px;top:566px;width:1px;height:465px;background:#131513"></div>
<div class="a" style="left:479px;top:566px;width:1px;height:465px;background:#131513"></div>
<div class="a" style="left:484px;top:566px;width:1px;height:465px;background:#131513"></div>
<div class="a" style="left:490px;top:566px;width:1px;height:465px;background:#131513"></div>
<div class="a" style="left:500px;top:566px;width:1px;height:465px;background:#131513"></div>
<div class="a" style="left:506px;top:566px;width:1px;height:465px;background:#131513"></div>
<div class="a" style="left:511px;top:566px;width:1px;height:465px;background:#131513"></div>
<div class="a" style="left:517px;top:566px;width:1px;height:465px;background:#131513"></div>
<div class="a" style="left:528px;top:566px;width:1px;height:465px;background:#131513"></div>
<div class="a" style="left:533px;top:566px;width:1px;height:465px;background:#131513"></div>
<div class="a" style="left:539px;top:566px;width:1px;height:465px;background:#131513"></div>
<div class="a" style="left:544px;top:566px;width:1px;height:465px;background:#131513"></div>
<div class="a" style="left:555px;top:566px;width:1px;height:465px;background:#131513"></div>
<div class="a" style="left:560px;top:566px;width:1px;height:465px;background:#131513"></div>
<div class="a" style="left:566px;top:566px;width:1px;height:465px;background:#131513"></div>
<div class="a" style="left:571px;top:566px;width:1px;height:465px;background:#131513"></div>
<div class="a" style="left:582px;top:566px;width:1px;height:465px;background:#131513"></div>
<div class="a" style="left:588px;top:566px;width:1px;height:465px;background:#131513"></div>
<div class="a" style="left:593px;top:566px;width:1px;height:465px;background:#131513"></div>
<div class="a" style="left:599px;top:566px;width:1px;height:465px;background:#131513"></div>
<div class="a" style="left:610px;top:566px;width:1px;height:465px;background:#131513"></div>
<div class="a" style="left:615px;top:566px;width:1px;height:465px;background:#131513"></div>
<div class="a" style="left:620px;top:566px;width:1px;height:465px;background:#131513"></div>
<div class="a" style="left:626px;top:566px;width:1px;height:465px;background:#131513"></div>
<div class="a" style="left:637px;top:566px;width:1px;height:465px;background:#131513"></div>
<div class="a" style="left:642px;top:566px;width:1px;height:465px;background:#131513"></div>
<div class="a" style="left:648px;top:566px;width:1px;height:465px;background:#131513"></div>
<div class="a" style="left:653px;top:566px;width:1px;height:465px;background:#131513"></div>
<div class="a" style="left:664px;top:566px;width:1px;height:465px;background:#131513"></div>
<div class="a" style="left:669px;top:566px;width:1px;height:465px;background:#131513"></div>
<div class="a" style="left:675px;top:566px;width:1px;height:465px;background:#131513"></div>
<div class="a" style="left:680px;top:566px;width:1px;height:465px;background:#131513"></div>
<div class="a" style="left:691px;top:566px;width:1px;height:465px;background:#131513"></div>
<div class="a" style="left:697px;top:566px;width:1px;height:465px;background:#131513"></div>
<div class="a" style="left:702px;top:566px;width:1px;height:465px;background:#131513"></div>
<div class="a" style="left:708px;top:566px;width:1px;height:465px;background:#131513"></div>
<div class="a" style="left:719px;top:566px;width:1px;height:465px;background:#131513"></div>
<div class="a" style="left:724px;top:566px;width:1px;height:465px;background:#131513"></div>
<div class="a" style="left:729px;top:566px;width:1px;height:465px;background:#131513"></div>
<div class="a" style="left:735px;top:566px;width:1px;height:465px;background:#131513"></div>
<div class="a" style="left:746px;top:566px;width:1px;height:465px;background:#131513"></div>
<div class="a" style="left:751px;top:566px;width:1px;height:465px;background:#131513"></div>
<div class="a" style="left:757px;top:566px;width:1px;height:465px;background:#131513"></div>
<div class="a" style="left:762px;top:566px;width:1px;height:465px;background:#131513"></div>
<div class="a" style="left:773px;top:566px;width:1px;height:465px;background:#131513"></div>
<div class="a" style="left:779px;top:566px;width:1px;height:465px;background:#131513"></div>
<div class="a" style="left:784px;top:566px;width:1px;height:465px;background:#131513"></div>
<div class="a" style="left:789px;top:566px;width:1px;height:465px;background:#131513"></div>
<div class="a" style="left:800px;top:566px;width:1px;height:465px;background:#131513"></div>
<div class="a" style="left:806px;top:566px;width:1px;height:465px;background:#131513"></div>
<div class="a" style="left:811px;top:566px;width:1px;height:465px;background:#131513"></div>
<div class="a" style="left:817px;top:566px;width:1px;height:465px;background:#131513"></div>
<div class="a" style="left:828px;top:566px;width:1px;height:465px;background:#131513"></div>
<div class="a" style="left:833px;top:566px;width:1px;height:465px;background:#131513"></div>
<div class="a" style="left:839px;top:566px;width:1px;height:465px;background:#131513"></div>
<div class="a" style="left:844px;top:566px;width:1px;height:465px;background:#131513"></div>
<div class="a" style="left:855px;top:566px;width:1px;height:465px;background:#131513"></div>
<div class="a" style="left:860px;top:566px;width:1px;height:465px;background:#131513"></div>
<div class="a" style="left:866px;top:566px;width:1px;height:465px;background:#131513"></div>
<div class="a" style="left:871px;top:566px;width:1px;height:465px;background:#131513"></div>
<div class="a" style="left:882px;top:566px;width:1px;height:465px;background:#131513"></div>
<div class="a" style="left:888px;top:566px;width:1px;height:465px;background:#131513"></div>
<div class="a" style="left:893px;top:566px;width:1px;height:465px;background:#131513"></div>
<div class="a" style="left:899px;top:566px;width:1px;height:465px;background:#131513"></div>
<div class="a" style="left:304px;top:988px;width:601px;height:1px;background:#1c2d1c"></div>
<div class="a" style="left:304px;top:989px;width:601px;height:1px;background:#121512"></div>
<div class="a" style="left:304px;top:967px;width:601px;height:1px;background:#233f23"></div>
<div class="a" style="left:304px;top:968px;width:601px;height:1px;background:#141a14"></div>
<div class="a" style="left:304px;top:946px;width:601px;height:1px;background:#1c2d1c"></div>
<div class="a" style="left:304px;top:947px;width:601px;height:1px;background:#121512"></div>
<div class="a" style="left:304px;top:925px;width:601px;height:1px;background:#233f23"></div>
<div class="a" style="left:304px;top:926px;width:601px;height:1px;background:#141a14"></div>
<div class="a" style="left:304px;top:904px;width:601px;height:1px;background:#1c2d1c"></div>
<div class="a" style="left:304px;top:905px;width:601px;height:1px;background:#121512"></div>
<div class="a" style="left:304px;top:882px;width:601px;height:1px;background:#233f23"></div>
<div class="a" style="left:304px;top:883px;width:601px;height:1px;background:#141a14"></div>
<div class="a" style="left:304px;top:861px;width:601px;height:1px;background:#1c2d1c"></div>
<div class="a" style="left:304px;top:862px;width:601px;height:1px;background:#121512"></div>
<div class="a" style="left:304px;top:840px;width:601px;height:1px;background:#233f23"></div>
<div class="a" style="left:304px;top:841px;width:601px;height:1px;background:#141a14"></div>
<div class="a" style="left:304px;top:819px;width:601px;height:1px;background:#1c2d1c"></div>
<div class="a" style="left:304px;top:820px;width:601px;height:1px;background:#121512"></div>
<div class="a" style="left:304px;top:798px;width:601px;height:1px;background:#233f23"></div>
<div class="a" style="left:304px;top:799px;width:601px;height:1px;background:#141a14"></div>
<div class="a" style="left:304px;top:777px;width:601px;height:1px;background:#1c2d1c"></div>
<div class="a" style="left:304px;top:778px;width:601px;height:1px;background:#121512"></div>
<div class="a" style="left:304px;top:756px;width:601px;height:1px;background:#233f23"></div>
<div class="a" style="left:304px;top:757px;width:601px;height:1px;background:#141a14"></div>
<div class="a" style="left:304px;top:735px;width:601px;height:1px;background:#1c2d1c"></div>
<div class="a" style="left:304px;top:736px;width:601px;height:1px;background:#121512"></div>
<div class="a" style="left:304px;top:713px;width:601px;height:1px;background:#233f23"></div>
<div class="a" style="left:304px;top:714px;width:601px;height:1px;background:#141a14"></div>
<div class="a" style="left:304px;top:692px;width:601px;height:1px;background:#1c2d1c"></div>
<div class="a" style="left:304px;top:693px;width:601px;height:1px;background:#121512"></div>
<div class="a" style="left:304px;top:671px;width:601px;height:1px;background:#233f23"></div>
<div class="a" style="left:304px;top:672px;width:601px;height:1px;background:#141a14"></div>
<div class="a" style="left:304px;top:650px;width:601px;height:1px;background:#1c2d1c"></div>
<div class="a" style="left:304px;top:651px;width:601px;height:1px;background:#121512"></div>
<div class="a" style="left:304px;top:629px;width:601px;height:1px;background:#233f23"></div>
<div class="a" style="left:304px;top:630px;width:601px;height:1px;background:#141a14"></div>
<div class="a" style="left:304px;top:608px;width:601px;height:1px;background:#1c2d1c"></div>
<div class="a" style="left:304px;top:609px;width:601px;height:1px;background:#121512"></div>
<div class="a" style="left:304px;top:587px;width:601px;height:1px;background:#233f23"></div>
<div class="a" style="left:304px;top:588px;width:601px;height:1px;background:#141a14"></div>
<div class="a" style="left:304px;top:566px;width:601px;height:1px;background:#1c2d1c"></div>
<div class="a" style="left:304px;top:567px;width:601px;height:1px;background:#121512"></div>
<div class="a" style="left:331px;top:566px;width:1px;height:465px;background:#244a24"></div>
<div class="a" style="left:332px;top:566px;width:1px;height:465px;background:#121612"></div>
<div class="a" style="left:358px;top:566px;width:1px;height:465px;background:#1d341d"></div>
<div class="a" style="left:359px;top:566px;width:1px;height:465px;background:#111411"></div>
<div class="a" style="left:385px;top:566px;width:1px;height:465px;background:#244a24"></div>
<div class="a" style="left:386px;top:566px;width:1px;height:465px;background:#121612"></div>
<div class="a" style="left:412px;top:566px;width:1px;height:465px;background:#1d341d"></div>
<div class="a" style="left:413px;top:566px;width:1px;height:465px;background:#111411"></div>
<div class="a" style="left:440px;top:566px;width:1px;height:465px;background:#244a24"></div>
<div class="a" style="left:441px;top:566px;width:1px;height:465px;background:#121612"></div>
<div class="a" style="left:467px;top:566px;width:1px;height:465px;background:#1d341d"></div>
<div class="a" style="left:468px;top:566px;width:1px;height:465px;background:#111411"></div>
<div class="a" style="left:494px;top:566px;width:1px;height:465px;background:#244a24"></div>
<div class="a" style="left:495px;top:566px;width:1px;height:465px;background:#121612"></div>
<div class="a" style="left:521px;top:566px;width:1px;height:465px;background:#1d341d"></div>
<div class="a" style="left:522px;top:566px;width:1px;height:465px;background:#111411"></div>
<div class="a" style="left:549px;top:566px;width:1px;height:465px;background:#244a24"></div>
<div class="a" style="left:550px;top:566px;width:1px;height:465px;background:#121612"></div>
<div class="a" style="left:576px;top:566px;width:1px;height:465px;background:#1d341d"></div>
<div class="a" style="left:577px;top:566px;width:1px;height:465px;background:#111411"></div>
<div class="a" style="left:603px;top:566px;width:1px;height:465px;background:#244a24"></div>
<div class="a" style="left:604px;top:566px;width:1px;height:465px;background:#121612"></div>
<div class="a" style="left:631px;top:566px;width:1px;height:465px;background:#1d341d"></div>
<div class="a" style="left:632px;top:566px;width:1px;height:465px;background:#111411"></div>
<div class="a" style="left:658px;top:566px;width:1px;height:465px;background:#244a24"></div>
<div class="a" style="left:659px;top:566px;width:1px;height:465px;background:#121612"></div>
<div class="a" style="left:685px;top:566px;width:1px;height:465px;background:#1d341d"></div>
<div class="a" style="left:686px;top:566px;width:1px;height:465px;background:#111411"></div>
<div class="a" style="left:712px;top:566px;width:1px;height:465px;background:#244a24"></div>
<div class="a" style="left:713px;top:566px;width:1px;height:465px;background:#121612"></div>
<div class="a" style="left:740px;top:566px;width:1px;height:465px;background:#1d341d"></div>
<div class="a" style="left:741px;top:566px;width:1px;height:465px;background:#111411"></div>
<div class="a" style="left:767px;top:566px;width:1px;height:465px;background:#244a24"></div>
<div class="a" style="left:768px;top:566px;width:1px;height:465px;background:#121612"></div>
<div class="a" style="left:794px;top:566px;width:1px;height:465px;background:#1d341d"></div>
<div class="a" style="left:795px;top:566px;width:1px;height:465px;background:#111411"></div>
<div class="a" style="left:821px;top:566px;width:1px;height:465px;background:#244a24"></div>
<div class="a" style="left:822px;top:566px;width:1px;height:465px;background:#121612"></div>
<div class="a" style="left:849px;top:566px;width:1px;height:465px;background:#1d341d"></div>
<div class="a" style="left:850px;top:566px;width:1px;height:465px;background:#111411"></div>
<div class="a" style="left:876px;top:566px;width:1px;height:465px;background:#244a24"></div>
<div class="a" style="left:877px;top:566px;width:1px;height:465px;background:#121612"></div>
<div class="a" style="left:903px;top:566px;width:1px;height:465px;background:#1d341d"></div>
<div class="a" style="left:904px;top:566px;width:1px;height:465px;background:#111411"></div>
<div class="a" style="left:304px;top:1009px;width:601px;height:2px;background:#56bc56"></div>
<div class="a" style="left:331px;top:566px;width:1px;height:465px;background:#5cd05c"></div>
<div class="a" style="left:876px;top:566px;width:1px;height:465px;background:#c8c8c8"></div>
<div class="a" style="left:336px;top:566px;width:1px;height:465px;background:#f0e070"></div>
<svg style="left:331px;top:566px" width="12" height="9"><path d="M0 0H11L5.5 8.5Z" fill="#f6ea6a"/></svg>
<svg style="left:331px;top:1021px" width="12" height="10"><path d="M0.5 10H11L5.75 0.5Z" fill="#f6ea6a"/></svg>
<div class="t" style="left:306px;top:998px;font-size:11px;color:#4a9e4a;letter-spacing:1px;-webkit-text-stroke:0">0</div>
<div class="t" style="left:306px;top:955px;font-size:11px;color:#4a9e4a;letter-spacing:1px;-webkit-text-stroke:0">0.1</div>
<div class="t" style="left:306px;top:913px;font-size:11px;color:#4a9e4a;letter-spacing:1px;-webkit-text-stroke:0">0.2</div>
<div class="t" style="left:306px;top:871px;font-size:11px;color:#4a9e4a;letter-spacing:1px;-webkit-text-stroke:0">0.3</div>
<div class="t" style="left:306px;top:829px;font-size:11px;color:#4a9e4a;letter-spacing:1px;-webkit-text-stroke:0">0.4</div>
<div class="t" style="left:306px;top:786px;font-size:11px;color:#4a9e4a;letter-spacing:1px;-webkit-text-stroke:0">0.5</div>
<div class="t" style="left:306px;top:744px;font-size:11px;color:#4a9e4a;letter-spacing:1px;-webkit-text-stroke:0">0.6</div>
<div class="t" style="left:306px;top:702px;font-size:11px;color:#4a9e4a;letter-spacing:1px;-webkit-text-stroke:0">0.7</div>
<div class="t" style="left:306px;top:660px;font-size:11px;color:#4a9e4a;letter-spacing:1px;-webkit-text-stroke:0">0.8</div>
<div class="t" style="left:306px;top:617px;font-size:11px;color:#4a9e4a;letter-spacing:1px;-webkit-text-stroke:0">0.9</div>
<div class="t" style="left:306px;top:575px;font-size:11px;color:#4a9e4a;letter-spacing:1px;-webkit-text-stroke:0">1</div>
<div class="t" style="left:389px;top:1019px;font-size:11px;color:#4a9e4a;letter-spacing:1px;-webkit-text-stroke:0">10</div>
<div class="t" style="left:443px;top:1019px;font-size:11px;color:#4a9e4a;letter-spacing:1px;-webkit-text-stroke:0">20</div>
<div class="t" style="left:498px;top:1019px;font-size:11px;color:#4a9e4a;letter-spacing:1px;-webkit-text-stroke:0">30</div>
<div class="t" style="left:553px;top:1019px;font-size:11px;color:#4a9e4a;letter-spacing:1px;-webkit-text-stroke:0">40</div>
<div class="t" style="left:607px;top:1019px;font-size:11px;color:#4a9e4a;letter-spacing:1px;-webkit-text-stroke:0">50</div>
<div class="t" style="left:662px;top:1019px;font-size:11px;color:#4a9e4a;letter-spacing:1px;-webkit-text-stroke:0">60</div>
<div class="t" style="left:716px;top:1019px;font-size:11px;color:#4a9e4a;letter-spacing:1px;-webkit-text-stroke:0">70</div>
<div class="t" style="left:771px;top:1019px;font-size:11px;color:#4a9e4a;letter-spacing:1px;-webkit-text-stroke:0">80</div>
<div class="t" style="left:825px;top:1019px;font-size:11px;color:#4a9e4a;letter-spacing:1px;-webkit-text-stroke:0">90</div>
<div class="t" style="left:880px;top:1019px;font-size:11px;color:#4a9e4a;letter-spacing:1px;-webkit-text-stroke:0">100</div>
<div class="a" style="left:0px;top:1031px;width:905px;height:26px;background:#3f3f3f"></div>
<div class="a" style="left:0px;top:1052px;width:5px;height:5px;background:#f0f0f0"></div>
<div class="a" style="left:0px;top:1047px;width:10px;height:10px;background:#3f3f3f;border-bottom-left-radius:4px"></div>
<div class="t" style="left:2px;top:1040px;font-size:11px;letter-spacing:0.7px;color:#a4a4a4;text-shadow:-1px -1px 0 #2a2a2a">No curve selected</div>
<div class="a" style="left:108px;top:1034px;width:690px;height:20px;background:#3a3a3a;border:1px solid #2a2a2a;border-radius:3px"></div>
<div class="t" style="left:806px;top:1040px;font-size:12px;color:#a0a0a0">=</div>
<div class="a" style="left:828px;top:1033px;width:75px;height:23px;background:linear-gradient(#4b4b4b,#434343);border:1px solid #262626;border-radius:4px"></div>
<div class="t" style="left:847px;top:1040px;font-size:11.5px;letter-spacing:0.5px;color:#9c9c9c;text-shadow:-1px -1px 0 #2e2e2e">Revert</div>
<div class="a" style="left:905px;top:22px;width:1px;height:1035px;background:#0a0a0a"></div>
<div class="a" style="left:906px;top:22px;width:1px;height:1035px;background:#5a5a5a"></div>
<div class="a" style="left:904px;top:46px;width:1px;height:1011px;background:#2a2a2a"></div>
<div class="a" style="left:907px;top:22px;width:990px;height:24px;background:#323232"></div>
<div class="a" style="left:910px;top:24px;width:16px;height:16px;background:linear-gradient(90deg,#b5b5b5 0 8px,#525252 8px);"></div>
<div class="a" style="left:910px;top:33px;width:8px;height:7px;background:#8a8a8a"></div>
<div class="a" style="left:930px;top:23px;width:108px;height:24px;background:#434343;border-radius:4px 4px 0 0;border:1px solid #2a2a2a;border-bottom:none"></div>
<div class="t" style="left:941px;top:28px;font-size:12.7px;color:#f0980a">smartLinker</div>
<div class="a" style="left:907px;top:46px;width:990px;height:318px;background:#434343"></div>
<div class="a" style="left:909px;top:47px;width:987px;height:315px;background:#424242;border:1px solid #1f1f1f"></div>
<div class="a" style="left:907px;top:364px;width:990px;height:1px;background:#0a0a0a"></div>
<div class="a" style="left:907px;top:365px;width:990px;height:1px;background:#5e5e5e"></div>
<div class="a" style="left:907px;top:366px;width:990px;height:4px;background:#434343"></div>
<div class="a" style="left:907px;top:370px;width:990px;height:687px;background:#3a3a3a"></div>
<div class="a" style="left:956px;top:95px;width:80px;height:30px;background:#383838"></div>
<svg style="left:987px;top:101px" width="18" height="17"><path d="M9 0.8L11.3 5.9 16.8 6.4 12.7 10.1 13.9 15.6 9 12.8 4.1 15.6 5.3 10.1 1.2 6.4 6.7 5.9Z" fill="#ffffff" stroke="#ffffff" stroke-width="1.2" stroke-linejoin="round"/></svg>
<div class="a" style="left:1046px;top:95px;width:80px;height:30px;background:#4596b9"></div>
<div class="t" style="left:1046px;top:104px;width:80px;text-align:center;font-size:12px;color:#e2e2e2">All</div>
<div class="a" style="left:1136px;top:95px;width:80px;height:30px;background:#383838"></div>
<div class="t" style="left:1136px;top:104px;width:80px;text-align:center;font-size:12px;color:#e2e2e2">Read</div>
<div class="a" style="left:1226px;top:95px;width:80px;height:30px;background:#383838"></div>
<div class="t" style="left:1226px;top:104px;width:80px;text-align:center;font-size:12px;color:#e2e2e2">ReadGeo2</div>
<div class="a" style="left:1316px;top:95px;width:80px;height:30px;background:#383838"></div>
<div class="t" style="left:1316px;top:104px;width:80px;text-align:center;font-size:12px;color:#e2e2e2">Camera2</div>
<div class="a" style="left:1692px;top:95px;width:137px;height:29px;background:#393939;border:1px solid #262626;border-radius:3px"></div>
<div class="t" style="left:1701px;top:104px;font-size:12px;color:#8c8c8c">search</div>
<svg style="left:1838px;top:100px" width="18" height="18"><g fill="none" stroke="#777" stroke-width="1.3"><path d="M3.2 11.5A6.3 6.3 0 0 1 13.5 3.5"/><path d="M14.8 6.5A6.3 6.3 0 0 1 4.5 14.5"/></g><path d="M11.5 1.5L15.5 2 14.8 6Z" fill="#777"/><path d="M6.5 16.5L2.5 16 3.2 12Z" fill="#777"/></svg>
<div class="a" style="left:961px;top:159px;width:90px;height:94px;background:#b3b3b3"></div>
<div class="a" style="left:954px;top:181px;width:5px;height:1px;background:#1a1a1a"></div>
<div class="a" style="left:961px;top:181px;width:90px;height:1px;background:rgba(0,0,0,0.09)"></div>
<div class="t" style="left:962px;top:195px;width:90px;text-align:center;font-size:11px;letter-spacing:0.55px;line-height:13px;color:#cdcdcd;text-shadow:-1px -1px 0 #444,-0.5px -0.5px 0 #444">Read1<br>een_Backgrou</div>
<div class="a" style="left:1061px;top:159px;width:90px;height:94px;background:#238bdb"></div>
<div class="a" style="left:1054px;top:181px;width:5px;height:1px;background:#1a1a1a"></div>
<div class="a" style="left:1061px;top:181px;width:90px;height:1px;background:rgba(0,0,0,0.09)"></div>
<div class="t" style="left:1062px;top:195px;width:90px;text-align:center;font-size:11px;letter-spacing:0.55px;line-height:13px;color:#ec94e6;text-shadow:-1px -1px 0 #444,-0.5px -0.5px 0 #444">Read2<br>IT8wP6U</div>
<div class="a" style="left:1161px;top:159px;width:90px;height:94px;background:#b3b3b3"></div>
<div class="a" style="left:1154px;top:181px;width:5px;height:1px;background:#1a1a1a"></div>
<div class="a" style="left:1161px;top:181px;width:90px;height:1px;background:rgba(0,0,0,0.09)"></div>
<div class="t" style="left:1162px;top:195px;width:90px;text-align:center;font-size:11px;letter-spacing:0.55px;line-height:13px;color:#cdcdcd;text-shadow:-1px -1px 0 #444,-0.5px -0.5px 0 #444">Read3<br>WDF_881671</div>
<div class="a" style="left:1261px;top:159px;width:90px;height:94px;background:#b3b3b3"></div>
<div class="a" style="left:1254px;top:181px;width:5px;height:1px;background:#1a1a1a"></div>
<div class="a" style="left:1261px;top:181px;width:90px;height:1px;background:rgba(0,0,0,0.09)"></div>
<div class="t" style="left:1262px;top:201px;width:90px;text-align:center;font-size:11px;letter-spacing:0.55px;line-height:13px;color:#cdcdcd;text-shadow:-1px -1px 0 #444,-0.5px -0.5px 0 #444">ReadGeo1</div>
<div class="a" style="left:1361px;top:159px;width:90px;height:94px;background:#b3b3b3"></div>
<div class="a" style="left:1354px;top:181px;width:5px;height:1px;background:#1a1a1a"></div>
<div class="a" style="left:1361px;top:181px;width:90px;height:1px;background:rgba(0,0,0,0.09)"></div>
<div class="t" style="left:1362px;top:195px;width:90px;text-align:center;font-size:11px;letter-spacing:0.55px;line-height:13px;color:#cdcdcd;text-shadow:-1px -1px 0 #444,-0.5px -0.5px 0 #444">ReadGeo2<br>backup</div>
<div class="a" style="left:1461px;top:159px;width:90px;height:94px;background:#b3b3b3"></div>
<div class="a" style="left:1454px;top:181px;width:5px;height:1px;background:#1a1a1a"></div>
<div class="a" style="left:1461px;top:181px;width:90px;height:1px;background:rgba(0,0,0,0.09)"></div>
<div class="t" style="left:1462px;top:201px;width:90px;text-align:center;font-size:11px;letter-spacing:0.55px;line-height:13px;color:#cdcdcd;text-shadow:-1px -1px 0 #444,-0.5px -0.5px 0 #444">ReadGeo3</div>
<div class="a" style="left:1561px;top:159px;width:90px;height:94px;background:#b3b3b3"></div>
<div class="a" style="left:1554px;top:181px;width:5px;height:1px;background:#1a1a1a"></div>
<div class="a" style="left:1561px;top:181px;width:90px;height:1px;background:rgba(0,0,0,0.09)"></div>
<div class="t" style="left:1562px;top:201px;width:90px;text-align:center;font-size:11px;letter-spacing:0.55px;line-height:13px;color:#cdcdcd;text-shadow:-1px -1px 0 #444,-0.5px -0.5px 0 #444">ReadGeo4</div>
<div class="a" style="left:1661px;top:159px;width:90px;height:94px;background:#b3b3b3"></div>
<div class="a" style="left:1654px;top:181px;width:5px;height:1px;background:#1a1a1a"></div>
<div class="a" style="left:1661px;top:181px;width:90px;height:1px;background:rgba(0,0,0,0.09)"></div>
<div class="t" style="left:1662px;top:201px;width:90px;text-align:center;font-size:11px;letter-spacing:0.55px;line-height:13px;color:#cdcdcd;text-shadow:-1px -1px 0 #444,-0.5px -0.5px 0 #444">ReadGeo5</div>
<div class="a" style="left:1761px;top:159px;width:88px;height:94px;background:#860f06"></div>
<div class="a" style="left:1754px;top:181px;width:5px;height:1px;background:#1a1a1a"></div>
<div class="a" style="left:1761px;top:181px;width:90px;height:1px;background:rgba(0,0,0,0.09)"></div>
<div class="t" style="left:1762px;top:201px;width:90px;text-align:center;font-size:11px;letter-spacing:0.55px;line-height:13px;color:#9fdce8;text-shadow:-1px -1px 0 rgba(20,20,20,0.5);letter-spacing:0.7px;width:88px;-webkit-text-stroke:0.5px #9fdce8;font-size:11.5px">Camera1</div>
<div class="a" style="left:1754px;top:181px;width:5px;height:1px;background:#1a1a1a"></div>
<div class="a" style="left:956px;top:264px;width:893px;height:15px;background:#393939"></div>
<div class="a" style="left:1551px;top:264px;width:298px;height:15px;background:#303030"></div>
<svg style="left:940px;top:309px" width="18" height="18"><path d="M14.35 7.35 14.52 8.08 16.15 8.17 16.15 9.83 14.52 9.92 14.35 10.65 13.95 11.62 13.56 12.26 14.64 13.47 13.47 14.64 12.26 13.56 11.62 13.95 10.65 14.35 9.92 14.52 9.83 16.15 8.17 16.15 8.08 14.52 7.35 14.35 6.38 13.95 5.74 13.56 4.53 14.64 3.36 13.47 4.44 12.26 4.05 11.62 3.65 10.65 3.48 9.92 1.85 9.83 1.85 8.17 3.48 8.08 3.65 7.35 4.05 6.38 4.44 5.74 3.36 4.53 4.53 3.36 5.74 4.44 6.38 4.05 7.35 3.65 8.08 3.48 8.17 1.85 9.83 1.85 9.92 3.48 10.65 3.65 11.62 4.05 12.26 4.44 13.47 3.36 14.64 4.53 13.56 5.74 13.95 6.38Z" fill="none" stroke="#9c9c9c" stroke-width="1.2" stroke-linejoin="round"/><circle cx="9" cy="9" r="2.6" fill="none" stroke="#9c9c9c" stroke-width="1.3"/></svg>
<div class="a" style="left:969px;top:315px;width:16px;height:7px;background:#a6a6a6"></div>
<svg style="left:111px;top:27px" width="16" height="16"><circle cx="8" cy="8" r="6.5" fill="#353535"/><path d="M5.2 5.2L10.8 10.8M10.8 5.2L5.2 10.8" stroke="#6e6e6e" stroke-width="1.6"/></svg>
<svg style="left:201px;top:26px" width="16" height="16"><path d="M5.2 5.2L10.8 10.8M10.8 5.2L5.2 10.8" stroke="#8c8c8c" stroke-width="1.6"/></svg>
<svg style="left:111px;top:546px" width="16" height="16"><circle cx="8" cy="8" r="6.5" fill="#424242"/><path d="M5.2 5.2L10.8 10.8M10.8 5.2L5.2 10.8" stroke="#8c8c8c" stroke-width="1.6"/></svg>
<svg style="left:1016px;top:26px" width="16" height="16"><path d="M5.2 5.2L10.8 10.8M10.8 5.2L5.2 10.8" stroke="#8c8c8c" stroke-width="1.6"/></svg>
<div class="a" style="left:1748px;top:954px;width:149px;height:103px;border-left:1px solid #d2d2d2;border-top:1px solid #d2d2d2"></div>
<div class="a" style="left:1749px;top:955px;width:4px;height:4px;border-right:1px solid #d2d2d2;border-bottom:1px solid #d2d2d2"></div>
<div class="a" style="left:1752px;top:981px;width:8px;height:9px;background:#d8d8d8"></div>
<div class="a" style="left:1753px;top:981px;width:6px;height:5px;background:radial-gradient(circle at 50% 40%,#c8e000,#3a8a00)"></div>
<div class="a" style="left:1769px;top:992px;width:6px;height:6px;background:#a00000"></div>
<div class="a" style="left:1790px;top:980px;width:8px;height:2px;background:#e0d000"></div>
<div class="a" style="left:1801px;top:981px;width:8px;height:2px;background:#b00000"></div>
<div class="a" style="left:1785px;top:995px;width:8px;height:7px;background:#d8d8d8"></div>
<div class="a" style="left:1786px;top:995px;width:6px;height:3px;background:radial-gradient(circle at 50% 40%,#c8e000,#3a8a00)"></div>
<div class="a" style="left:1792px;top:998px;width:8px;height:7px;background:#e8e8e8"></div>
<div class="a" style="left:1792px;top:998px;width:8px;height:5px;background:linear-gradient(#3070e0,#0a1030)"></div>
<div class="a" style="left:1800px;top:998px;width:2px;height:6px;background:#c00000"></div>
<div class="a" style="left:1796px;top:1006px;width:6px;height:6px;background:#a00000"></div>
<div class="a" style="left:1795px;top:1013px;width:6px;height:6px;background:#d00000"></div>
<div class="a" style="left:1812px;top:993px;width:8px;height:2px;background:#e6e6e6"></div>
<div class="a" style="left:1812px;top:1000px;width:8px;height:2px;background:#e6e6e6"></div>
<div class="a" style="left:1812px;top:1006px;width:8px;height:2px;background:#e6e6e6"></div>
<div class="a" style="left:1810px;top:1012px;width:8px;height:2px;background:#e6e6e6"></div>
<div class="a" style="left:1809px;top:1016px;width:8px;height:2px;background:#e6e6e6"></div>
<div class="a" style="left:1811px;top:1028px;width:9px;height:3px;background:#f4b860;border-radius:1px"></div>
<div class="a" style="left:1874px;top:993px;width:8px;height:7px;background:#1c2a38"></div>
<div class="a" style="left:1874px;top:997px;width:8px;height:2px;background:#22aaf0"></div>
<div class="a" style="left:1863px;top:1012px;width:8px;height:9px;background:#1c2a38"></div>
<div class="a" style="left:1863px;top:1017px;width:8px;height:4px;background:#22aaf0"></div>
<div class="a" style="left:1874px;top:1012px;width:8px;height:9px;background:#1c2a38"></div>
<div class="a" style="left:1874px;top:1017px;width:8px;height:4px;background:#22aaf0"></div>
<div class="a" style="left:1885px;top:1012px;width:8px;height:9px;background:#1c2a38"></div>
<div class="a" style="left:1885px;top:1017px;width:8px;height:4px;background:#22aaf0"></div>
<div class="a" style="left:1895px;top:963px;width:2px;height:68px;background:#e4b4b4"></div>
<div class="a" style="left:1895px;top:1055px;width:2px;height:2px;background:#f0f0f0;border-top-left-radius:2px"></div>
</body></html>
